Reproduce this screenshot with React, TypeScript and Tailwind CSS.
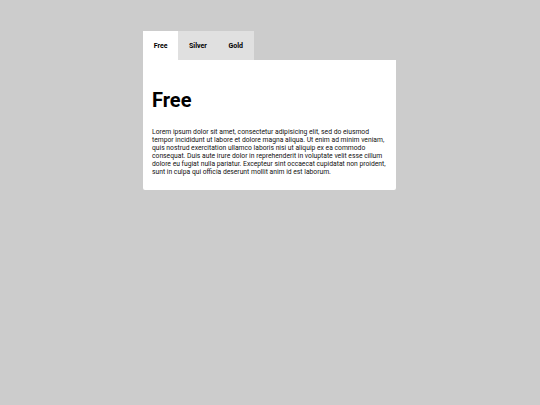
import { useState } from "react";

const tabs = ["Free", "Silver", "Gold"];

const lines = [
  "Lorem ipsum dolor sit amet, consectetur adipisicing elit, sed do eiusmod",
  "tempor incididunt ut labore et dolore magna aliqua. Ut enim ad minim veniam,",
  "quis nostrud exercitation ullamco laboris nisi ut aliquip ex ea commodo",
  "consequat. Duis aute irure dolor in reprehenderit in voluptate velit esse cillum",
  "dolore eu fugiat nulla pariatur. Excepteur sint occaecat cupidatat non proident,",
  "sunt in culpa qui officia deserunt mollit anim id est laborum.",
];

export default function App() {
  const [active, setActive] = useState("Free");

  return (
    <div
      className="w-[540px] h-[405px] bg-[#cccccc] pt-[31px] pl-[143px]"
      style={{ fontFamily: "Roboto, sans-serif" }}
    >
      <div className="w-[253px]">
        {/* tab bar */}
        <div className="flex">
          {tabs.map((t) => (
            <button
              key={t}
              onClick={() => setActive(t)}
              className={
                "h-[29px] px-[10.75px] pt-[1px] text-[7px] font-bold text-black " +
                (active === t ? "bg-white" : "bg-[#e0e0e0]")
              }
            >
              {t}
            </button>
          ))}
        </div>

        {/* panel */}
        <div className="bg-white rounded-b-[2px] px-[9px] pt-[28px] pb-[14px]">
          <h1 className="text-[20px] font-bold leading-[24px] text-black">
            {active}
          </h1>
          <p className="mt-[16px] text-[6.75px] leading-[8px] text-[#111]">
            {lines.map((l, i) => (
              <span key={i} className="block whitespace-nowrap">
                {l}
              </span>
            ))}
          </p>
        </div>
      </div>
    </div>
  );
}
